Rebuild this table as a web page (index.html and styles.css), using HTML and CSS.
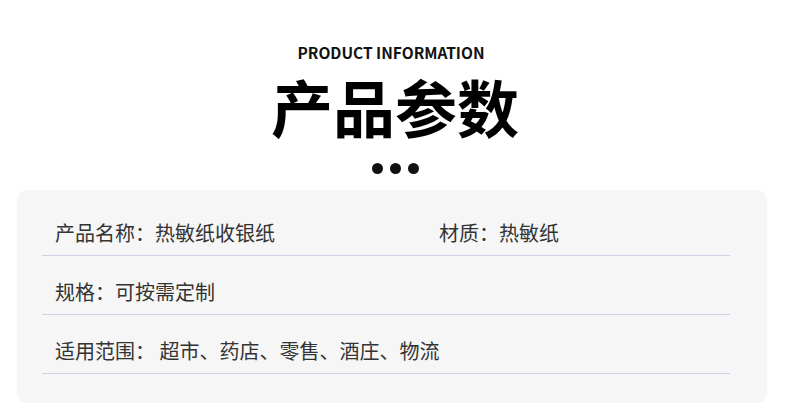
FILE: index.html
```html
<!DOCTYPE html>
<html lang="zh-CN">
<head>
    <meta charset="UTF-8">
    <meta name="viewport" content="width=device-width, initial-scale=1.0">
    <title>产品参数</title>
    <link rel="stylesheet" href="styles.css">
</head>
<body>
    <div class="header">
        <div class="eyebrow">PRODUCT INFORMATION</div>
        <h1 class="title">产品参数</h1>
        <div class="dots">
            <span></span><span></span><span></span>
        </div>
    </div>

    <div class="card">
        <div class="list">
            <div class="row">
                <div class="cell cell-half">产品名称：热敏纸收银纸</div>
                <div class="cell">材质：热敏纸</div>
            </div>
            <div class="row">
                <div class="cell">规格：可按需定制</div>
            </div>
            <div class="row">
                <div class="cell">适用范围： 超市、药店、零售、酒庄、物流</div>
            </div>
        </div>
    </div>
</body>
</html>
```

FILE: styles.css
```css
body {
    margin: 0;
    background: #fff;
    font-family: "Noto Sans CJK SC", "Noto Sans", sans-serif;
    color: #333;
}
.header {
    display: flex;
    flex-direction: column;
    align-items: center;
    padding-top: 41px;
}
.eyebrow {
    padding-right: 8px;
    font-size: 15.5px;
    font-weight: 700;
    line-height: 22px;
    color: #111;
}
.title {
    margin: 8px 0 0;
    font-size: 62px;
    font-weight: 700;
    line-height: 70px;
    color: #000;
}
.dots {
    display: flex;
    gap: 7px;
    margin-top: 22px;
}
.dots span {
    width: 11px;
    height: 11px;
    border-radius: 50%;
    background: #111;
}
.card {
    margin: 16px 23px 0 17px;
    padding: 7px 37px 29px 25px;
    background: #f6f6f6;
    border-radius: 10px;
}
.row {
    display: flex;
    padding: 24px 13px 10px;
    border-bottom: 1px solid #cdd3e8;
}
.cell {
    font-size: 20px;
    line-height: 24px;
}
.cell-half {
    width: 384px;
}
```
